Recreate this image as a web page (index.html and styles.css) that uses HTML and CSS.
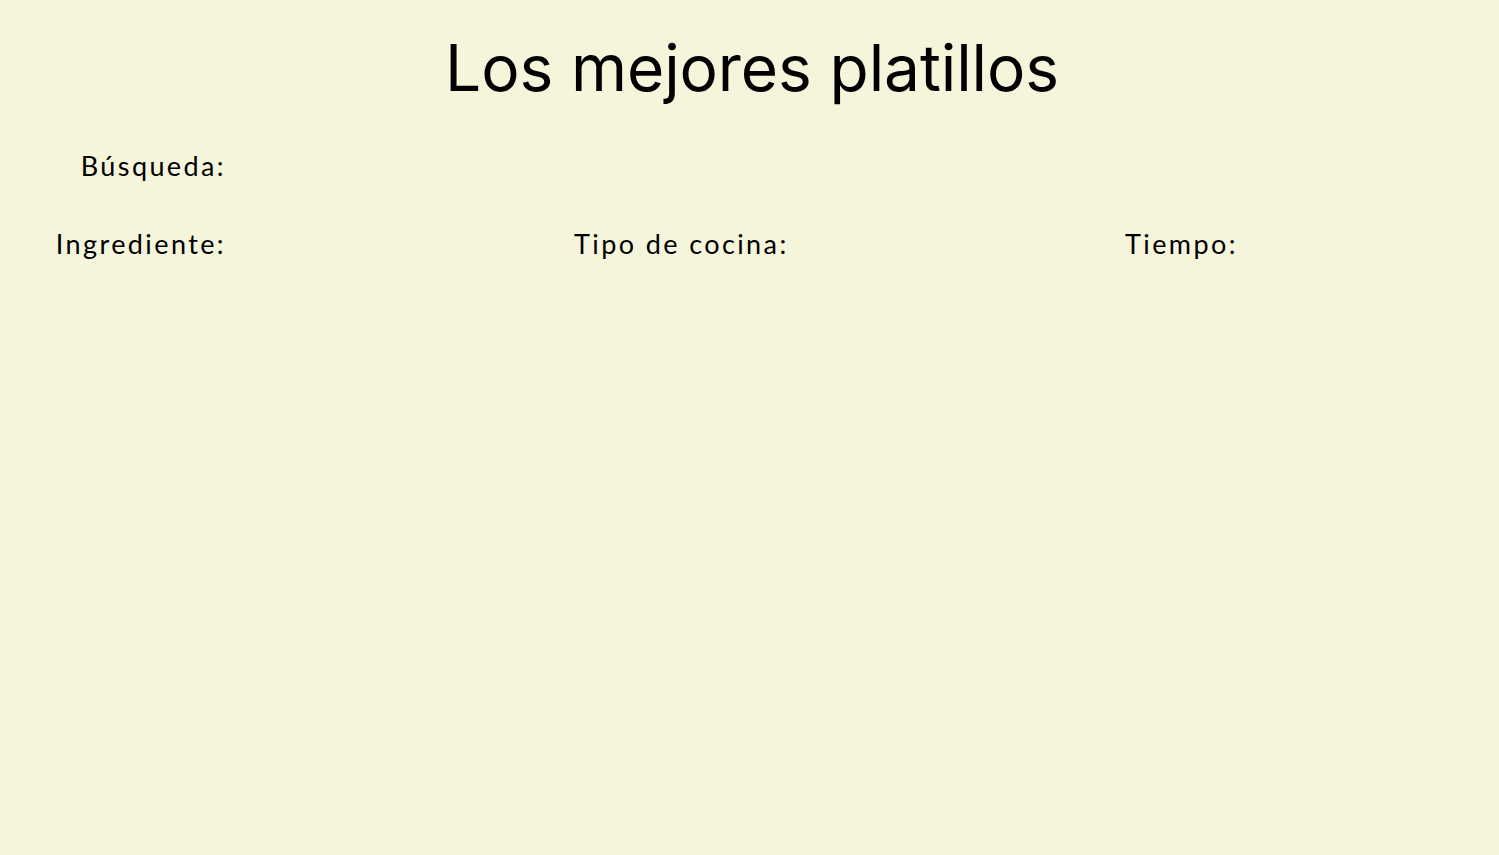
FILE: index.html
```html
<!DOCTYPE html>
<html lang="es">
<head>
<meta charset="utf-8">
<title>Los mejores platillos</title>
<link rel="stylesheet" href="styles.css">
</head>
<body>
  <h1 class="title">Los mejores platillos</h1>
  <form class="filters">
    <div class="row row-search">
      <label class="label label-right">Búsqueda:</label>
    </div>
    <div class="row row-fields">
      <div class="field"><label class="label label-right">Ingrediente:</label></div>
      <div class="field"><label class="label">Tipo de cocina:</label></div>
      <div class="field"><label class="label">Tiempo:</label></div>
    </div>
  </form>
</body>
</html>
```
FILE: styles.css
```css
html, body {
  margin: 0;
  padding: 0;
  background: #f5f5dc;
  height: 100%;
}
body {
  color: #000;
  font-family: Inter, "Noto Sans", sans-serif;
}
.title {
  margin: 29px 0 0;
  padding-left: 5px;
  font-family: Inter, sans-serif;
  font-weight: 400;
  font-size: 64px;
  line-height: 77px;
  letter-spacing: -0.1px;
  text-align: center;
}
.filters {
  display: flex;
  flex-direction: column;
}
.row {
  display: grid;
  grid-template-columns: 574px 551px 1fr;
  align-items: baseline;
}
.row-search {
  margin-top: 43px;
}
.row-fields {
  margin-top: 44px;
}
.label {
  display: block;
  font-family: Lato, "Open Sans", sans-serif;
  font-size: 27px;
  line-height: 34px;
  letter-spacing: 2.4px;
}
.label-right {
  width: 226px;
  text-align: right;
}
```
